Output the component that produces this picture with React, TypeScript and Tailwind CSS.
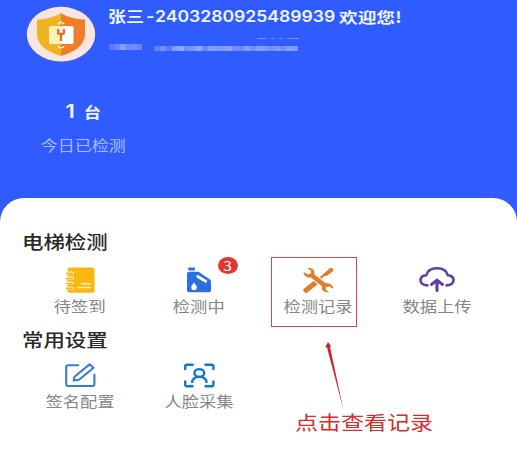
import type { ReactNode } from "react";

interface MenuItemProps {
  label: string;
  icon: ReactNode;
  badge?: number;
  active?: boolean;
}

// opacities of the masked company line
const maskLeft = [30, 45, 65, 45, 50, 40];
const maskRight = [35, 50, 30, 65, 75, 50, 60, 75, 45, 65, 60, 60, 70, 50, 45, 65, 50, 65, 60, 50, 60, 50, 65, 60];

function ShieldLogo() {
  return (
    <svg className="block h-[56px] w-[70px]" viewBox="0 0 70 56">
      <ellipse cx="35" cy="28.2" rx="34.2" ry="27.4" fill="#fae6e0" />
      <path d="M35 7C29 11 20 13.5 11 13.5V29C12 40 22 46 35 50Z" fill="#f0b323" />
      <path d="M35 7C41 11 50 13.5 59 13.5V29C58 40 48 46 35 50Z" fill="#f07d28" />
      <path d="M32 18.2Q35 14.2 38 18.2M32 40.2Q35 43.4 38 40.2" fill="none" stroke="#fff3dc" strokeWidth="1.6" />
      <rect x="23" y="20" width="12" height="18" rx="1.5" fill="#fff0b8" />
      <rect x="34.5" y="20" width="13" height="18" rx="1.5" fill="#fff" />
      <path d="M32.2 24V27Q35 29.5 37.8 27V24M35 28V34" fill="none" stroke="#d9722c" strokeWidth="2.4" strokeLinecap="round" />
    </svg>
  );
}

function NotebookIcon() {
  return (
    <svg className="block h-[28px] w-[32px]" viewBox="0 0 32 28">
      <rect x="3.5" y="1.5" width="27" height="25.3" rx="2.5" fill="#fbb60f" />
      <path d="M3 7H8.5M3 12.2H8.5M3 17.4H8.5M3 22.3H8.5" stroke="#fff" strokeWidth="3.2" strokeLinecap="round" />
      <path d="M2.6 7.3H8.3M2.6 12.5H8.3M2.6 17.6H8.3M2.6 22.5H8.3" stroke="#fbb60f" strokeWidth="1.8" strokeLinecap="round" />
      <path d="M17.5 17.8H26M13.5 21.6H26" stroke="#fff2c4" strokeWidth="1.5" strokeLinecap="round" />
    </svg>
  );
}

function OilIcon() {
  return (
    <svg className="block h-[28px] w-[32px]" viewBox="0 0 32 28">
      <rect x="5.3" y="1.5" width="6.6" height="3" rx="0.8" fill="#2c70df" />
      <path d="M6 5.8H15.5L27 13.6Q28 14.3 28 15.5V24.2Q28 26.2 26 26.2H6Q4 26.2 4 24.2V7.8Q4 5.8 6 5.8Z" fill="#2c70df" />
      <path d="M14.8 10.5L22.6 15.3" stroke="#fff" strokeWidth="2.8" strokeLinecap="round" />
      <path d="M11 16.6C9.5 18.7 8.2 19.7 8.2 21.4A2.8 2.6 0 0 0 13.8 21.4C13.8 19.7 12.5 18.7 11 16.6Z" fill="#fff" />
    </svg>
  );
}

function ToolsIcon() {
  return (
    <svg className="block h-[28px] w-[32px]" viewBox="0 0 32 28">
      <path d="M4 24.2L13.2 17" stroke="#e27d27" strokeWidth="5.2" strokeLinecap="round" />
      <path d="M17.5 12.7L24 7.3" stroke="#e27d27" strokeWidth="2.2" />
      <path d="M21.2 8.2L28 2L31.4 2.4L31 5.2L24.5 10.2Z" fill="#e27d27" />
      <path d="M8.5 8.3L23.8 20.4" stroke="#fff" strokeWidth="6.8" />
      <path d="M8.5 8.3L23.8 20.4" stroke="#e27d27" strokeWidth="4.6" />
      <path d="M5.3 2.3C9.6 1.3 13.4 4.3 12.4 8.3L9.5 11.2C5 12.1 1.4 9.7 1.6 5.9L5.6 8.2L8.8 7.4L9 4.8Z" fill="#e27d27" />
      <path d="M27.1 26C22.8 27 19 24.3 20 20.5L22.9 17.4C27.4 16.5 31.2 18.9 31 22.7L27 20.4L23.8 21.2L23.6 23.8Z" fill="#e27d27" />
    </svg>
  );
}

function UploadIcon() {
  return (
    <svg className="block h-[28px] w-[38px]" viewBox="0 0 38 28" fill="none" stroke="#5b3db0" strokeWidth="2.6" strokeLinecap="round" strokeLinejoin="round">
      <path d="M9.3 19.4C4.5 19.4 2.2 16.6 2.5 13.7C2.8 10.9 5.3 9.3 8.3 9.2C9.4 4.8 13.7 2.3 19 2.3C24.3 2.3 28.6 4.8 29.7 9.2C32.7 9.3 35.2 10.9 35.5 13.7C35.8 16.6 33.5 19.4 28.7 19.4" />
      <path d="M19 24.4V15M13.6 18.4L19 14.2L24.4 18.4" strokeWidth="3.1" />
    </svg>
  );
}

function SignIcon() {
  return (
    <svg className="block h-[28px] w-[32px]" viewBox="0 0 32 28" fill="none" stroke="#3a7bcb" strokeWidth="2.1" strokeLinejoin="round">
      <path d="M14.2 4.2H4.2Q2.2 4.2 2.2 6.2V23Q2.2 25 4.2 25H28.4Q30.4 25 30.4 23V13.8" strokeLinecap="round" />
      <path d="M25.5 3.4L29.6 6.8L15 18.8L9.7 19.5L10.5 15.8Z" />
    </svg>
  );
}

function FaceIcon() {
  return (
    <svg className="block h-[28px] w-[32px]" viewBox="0 0 32 28" fill="none" stroke="#1477cb" strokeWidth="2.4">
      <path d="M2.2 9V5.4Q2.2 3.7 3.9 3.7H10.5M21.5 3.7H28.7Q30.4 3.7 30.4 5.4V9M30.4 19.6V23.6Q30.4 25.3 28.7 25.3H21.5M10.5 25.3H3.9Q2.2 25.3 2.2 23.6V19.6" />
      <ellipse cx="16.3" cy="12" rx="4.9" ry="3.9" />
      <path d="M9 21.8C9.3 17.8 12.5 15.9 16.3 15.9C20.1 15.9 23.3 17.8 23.6 21.8" />
    </svg>
  );
}

function MenuItem({ label, icon, badge, active }: MenuItemProps) {
  return (
    <div className="relative flex flex-col items-center">
      {icon}
      <span className="mt-[2px] mb-px scale-x-[1.19] text-[14.5px] leading-5 whitespace-nowrap text-[#858585]">{label}</span>
      {badge && (
        <span className="absolute -top-[9px] left-[79px] flex h-[17px] w-5 items-center justify-center rounded-[50%] bg-[#e5352f] text-[13px] leading-none text-white">
          <span className="scale-x-[1.2]">{badge}</span>
        </span>
      )}
      {active && <div className="absolute -top-[9px] left-[13px] h-[70px] w-[86px] border border-[#cf4a49]" />}
    </div>
  );
}

function SectionTitle({ children }: { children: ReactNode }) {
  return (
    <h2 className="ml-[2px] w-fit origin-left scale-x-[1.19] text-[18px] leading-6 font-medium text-[#292929]">{children}</h2>
  );
}

export default function App() {
  return (
    <div className="flex h-[462px] w-[517px] flex-col overflow-hidden bg-[#305cff] font-['Noto_Sans_CJK_SC',sans-serif]">
      <header className="h-[198px] shrink-0">
        <div className="flex pt-[6px] pl-[26px]">
          <ShieldLogo />
          <div className="ml-[12px]">
            <h1 className="flex h-5 items-center text-[15px] leading-5 font-bold whitespace-nowrap text-[#edf5ff]">
              <span className="w-[38px] origin-left scale-x-[1.2]">张三</span>
              <span className="w-[9px] origin-left scale-x-[1.15] font-['Inter',sans-serif] text-[16px] font-semibold">-</span>
              <span className="w-[184px] origin-left scale-x-[1.1] font-['Inter',sans-serif] text-[16px] font-semibold">2403280925489939</span>
              <span className="origin-left scale-x-[1.22] text-[15.3px]">欢迎您!</span>
            </h1>
            <div className="mt-[8px] ml-[149px] flex h-[8px] items-center gap-1">
              <i className="h-px w-2.5 bg-[#7595ff]" />
              <i className="h-px w-1 bg-[#7595ff]" />
              <i className="h-px w-1 bg-[#7595ff]" />
              <i className="h-px w-3 bg-[#7595ff]" />
            </div>
            <div className="ml-[1px] flex h-[10px] items-center">
              {maskLeft.map((o, i) => (
                <i key={i} className="h-[6px] w-[5.5px] bg-[#b0c4ff]" style={{ opacity: o / 100 }} />
              ))}
              <div className="w-[12px]" />
              {maskRight.map((o, i) => (
                <i key={i} className="mt-[3px] h-[5px] w-[6px] bg-[#b0c4ff]" style={{ opacity: o / 100 }} />
              ))}
            </div>
          </div>
        </div>
        <div className="mt-[38px] ml-[23px] flex w-[120px] flex-col items-center">
          <div className="flex h-6 items-center gap-[10px] font-bold text-[#edf5ff]">
            <span className="scale-x-[1.2] font-['Inter',sans-serif] text-[19px] leading-6 font-semibold">1</span>
            <span className="scale-x-[1.15] text-[15px] leading-6">台</span>
          </div>
          <span className="mt-[11px] scale-x-[1.17] text-[14.5px] leading-5 text-[#a9bdff]">今日已检测</span>
        </div>
      </header>
      <main className="grow rounded-t-[24px] bg-white px-5 pt-[31px]">
        <SectionTitle>电梯检测</SectionTitle>
        <div className="mt-[13px] grid w-[476px] grid-cols-4">
          <MenuItem label="待签到" icon={<NotebookIcon />} />
          <MenuItem label="检测中" icon={<OilIcon />} badge={3} />
          <MenuItem label="检测记录" icon={<ToolsIcon />} active />
          <MenuItem label="数据上传" icon={<UploadIcon />} />
        </div>
        <div className="mt-[10px]">
          <SectionTitle>常用设置</SectionTitle>
        </div>
        <div className="mt-[10px] grid w-[476px] grid-cols-4">
          <MenuItem label="签名配置" icon={<SignIcon />} />
          <MenuItem label="人脸采集" icon={<FaceIcon />} />
        </div>
      </main>
      {/* callout for the highlighted entry */}
      <svg className="absolute top-[340px] left-[320px] h-[72px] w-[28px]" viewBox="0 0 28 72">
        <path d="M8 2L11 6L10 7L23.5 70L7 7.5L5.3 7Z" fill="#c9272d" />
      </svg>
      <span className="absolute top-[408px] left-[295px] origin-left scale-x-[1.21] text-[19px] leading-[28px] whitespace-nowrap text-[#d92a2c]">点击查看记录</span>
    </div>
  );
}
